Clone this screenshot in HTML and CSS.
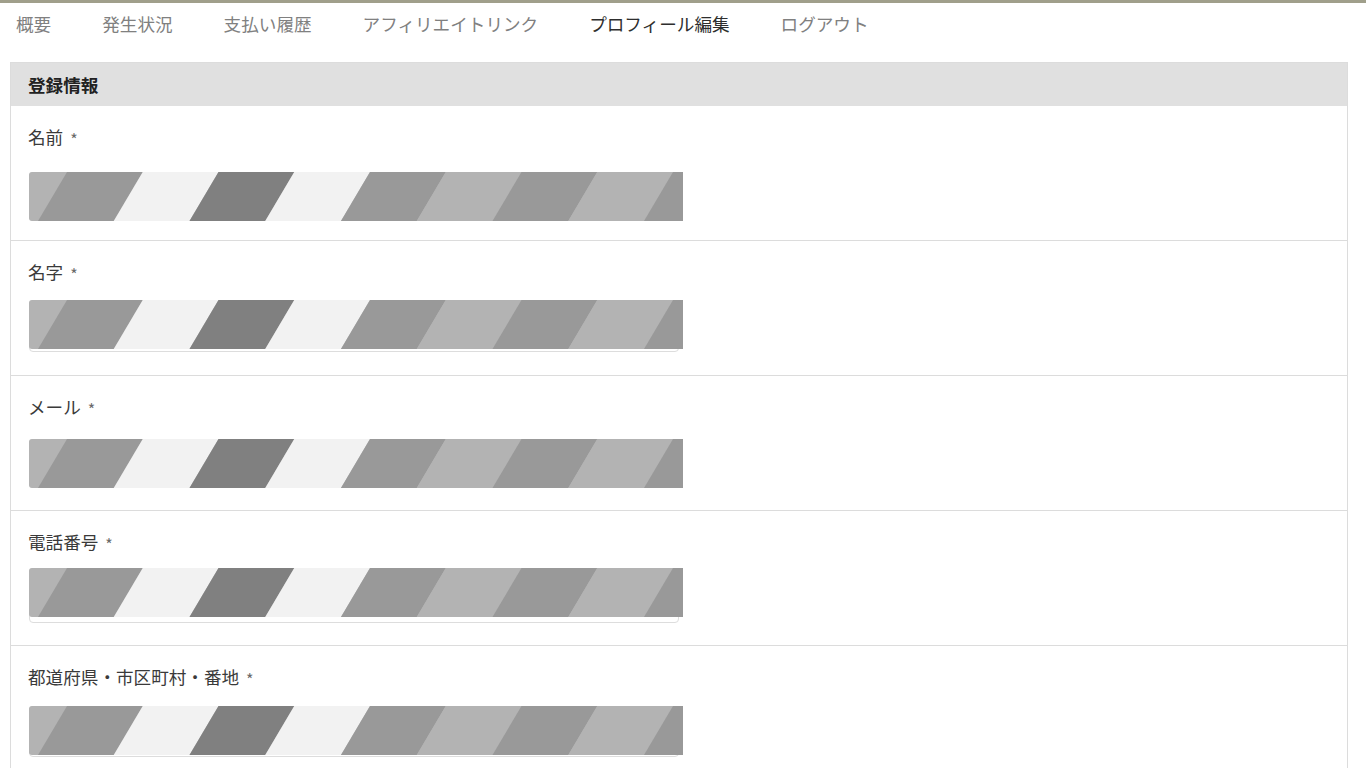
FILE: index.html
```html
<!DOCTYPE html>
<html lang="ja">
<head>
<meta charset="utf-8">
<title>プロフィール編集</title>
<link rel="stylesheet" href="styles.css">
</head>
<body>
<svg class="defs" width="0" height="0" aria-hidden="true">
  <defs>
    <symbol id="stripes" viewBox="0 0 654 49" preserveAspectRatio="none">
      <rect x="0" y="0" width="654" height="49" fill="#b3b3b3"/>
      <polygon points="38,0 113.75,0 84.75,49 9,49" fill="#999999"/>
      <polygon points="113.75,0 189.5,0 160.5,49 84.75,49" fill="#f2f2f2"/>
      <polygon points="189.5,0 265.25,0 236.25,49 160.5,49" fill="#808080"/>
      <polygon points="265.25,0 341,0 312,49 236.25,49" fill="#f2f2f2"/>
      <polygon points="341,0 416.75,0 387.75,49 312,49" fill="#999999"/>
      <polygon points="416.75,0 492.5,0 463.5,49 387.75,49" fill="#b3b3b3"/>
      <polygon points="492.5,0 568.25,0 539.25,49 463.5,49" fill="#999999"/>
      <polygon points="568.25,0 644,0 615,49 539.25,49" fill="#b3b3b3"/>
      <polygon points="644,0 654,0 654,49 615,49" fill="#999999"/>
    </symbol>
  </defs>
</svg>
<div class="page">
  <nav class="tabs">
    <a class="tab" href="#">概要</a>
    <a class="tab" href="#">発生状況</a>
    <a class="tab" href="#">支払い履歴</a>
    <a class="tab" href="#">アフィリエイトリンク</a>
    <a class="tab tab-active" href="#">プロフィール編集</a>
    <a class="tab" href="#">ログアウト</a>
  </nav>

  <section class="card">
    <div class="card-head">登録情報</div>

    <div class="row row-1">
      <div class="label">名前 <span class="req">*</span></div>
      <div class="field">
        <div class="input"></div>
        <div class="mask"><svg class="stripes"><use href="#stripes"/></svg></div>
      </div>
    </div>

    <div class="row row-2">
      <div class="label">名字 <span class="req">*</span></div>
      <div class="field">
        <div class="input"></div>
        <div class="mask"><svg class="stripes"><use href="#stripes"/></svg></div>
      </div>
    </div>

    <div class="row row-3">
      <div class="label">メール <span class="req">*</span></div>
      <div class="field">
        <div class="input"></div>
        <div class="mask"><svg class="stripes"><use href="#stripes"/></svg></div>
      </div>
    </div>

    <div class="row row-4">
      <div class="label">電話番号 <span class="req">*</span></div>
      <div class="field">
        <div class="input"></div>
        <div class="mask"><svg class="stripes"><use href="#stripes"/></svg></div>
      </div>
    </div>

    <div class="row row-5">
      <div class="label">都道府県・市区町村・番地 <span class="req">*</span></div>
      <div class="field">
        <div class="input"></div>
        <div class="mask"><svg class="stripes"><use href="#stripes"/></svg></div>
      </div>
    </div>
  </section>
</div>
</body>
</html>
```

FILE: styles.css
```css
html, body {
  margin: 0;
  padding: 0;
  background: #ffffff;
}

body {
  font-family: "Noto Sans CJK JP", "Noto Sans", sans-serif;
  font-size: 17.6px;
  color: #333333;
  overflow: hidden;
}

.defs {
  position: absolute;
  width: 0;
  height: 0;
  overflow: hidden;
}

.page {
  border-top: 3px solid #a09f8b;
  min-height: 765px;
}

.tabs {
  display: flex;
  align-items: center;
  gap: 51px;
  height: 42px;
  padding-left: 16px;
}

.tab {
  color: #808080;
  text-decoration: none;
  line-height: 24px;
  white-space: nowrap;
}

.tab-active {
  color: #2e2e2e;
}

.card {
  margin: 17px 18px 0 10px;
  border: 1px solid #dcdcdc;
  border-bottom: none;
}

.card-head {
  background: #e0e0e0;
  height: 43px;
  display: flex;
  align-items: center;
  padding-left: 17px;
  font-weight: bold;
  color: #222222;
}

.row {
  padding: 19px 17px 23px;
  border-bottom: 1px solid #dcdcdc;
}

.label {
  line-height: 24px;
  height: 24px;
  margin-bottom: 17px;
  color: #3a3a3a;
  white-space: nowrap;
}

.req {
  font-size: 16px;
  color: #6a6a6a;
  margin-left: 3px;
  vertical-align: -2px;
}

.field {
  position: relative;
  width: 654px;
  margin-left: 1px;
}

.input {
  box-sizing: border-box;
  width: 650px;
  height: 51px;
  border: 1px solid #dddddd;
  border-radius: 4px;
  background: #ffffff;
}

.mask {
  position: absolute;
  left: 0;
  top: 0;
  width: 654px;
  height: 49px;
  border-radius: 3px 0 0 3px;
  overflow: hidden;
}

.stripes {
  display: block;
  width: 654px;
  height: 49px;
}

.row-1 { padding-bottom: 19px; }
.row-1 .label { margin-bottom: 23px; }
.row-1 .input { height: 49px; }

.row-2 { padding-bottom: 23px; }
.row-2 .label { margin-bottom: 16px; }
.row-2 .input { height: 52px; }

.row-3 { padding-bottom: 22px; }
.row-3 .label { margin-bottom: 20px; }
.row-3 .input { height: 49px; }

.row-4 { padding-bottom: 22px; }
.row-4 .label { margin-bottom: 14px; }
.row-4 .input { height: 55px; }

.row-5 { padding-bottom: 23px; }
.row-5 .label { margin-bottom: 17px; }
.row-5 .input { height: 51px; }
```
